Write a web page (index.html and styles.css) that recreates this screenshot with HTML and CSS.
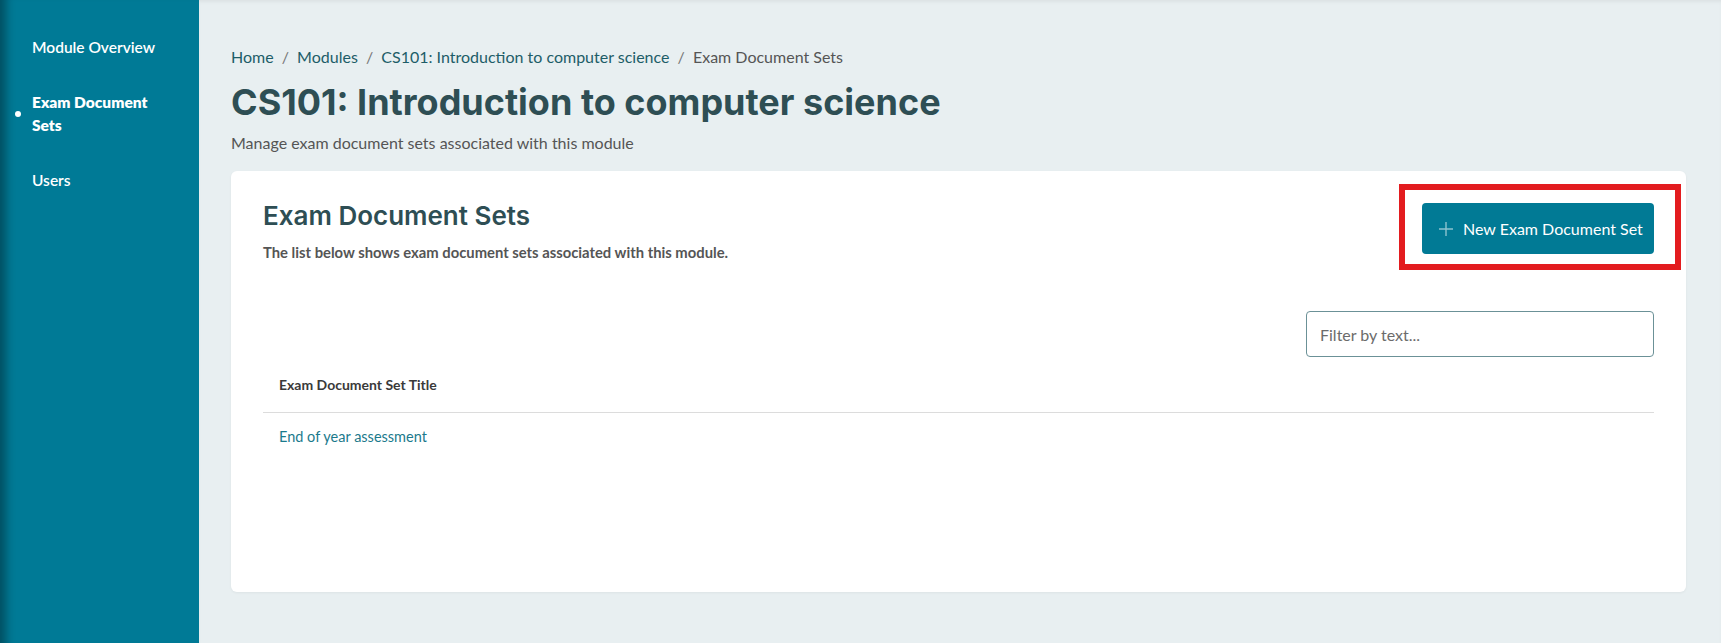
FILE: index.html
```html
<!DOCTYPE html>
<html lang="en">
<head>
  <meta charset="UTF-8">
  <meta name="viewport" content="width=device-width, initial-scale=1.0">
  <title>Exam Document Sets - CS101</title>
  <link rel="stylesheet" href="styles.css">
</head>
<body>
  <aside class="sidebar">
    <ul class="side-nav">
      <li><a href="#">Module Overview</a></li>
      <li class="active"><a href="#">Exam Document Sets</a></li>
      <li><a href="#">Users</a></li>
    </ul>
  </aside>

  <main class="content">
    <nav class="breadcrumb">
      <a href="#">Home</a>
      <span class="sep">/</span>
      <a href="#">Modules</a>
      <span class="sep">/</span>
      <a href="#">CS101: Introduction to computer science</a>
      <span class="sep">/</span>
      <span class="current">Exam Document Sets</span>
    </nav>
    <h1 class="page-title">CS101: Introduction to computer science</h1>
    <p class="page-desc">Manage exam document sets associated with this module</p>

    <section class="card">
      <div class="card-head">
        <div>
          <h2>Exam Document Sets</h2>
          <p class="card-sub">The list below shows exam document sets associated with this module.</p>
        </div>
        <div class="action">
          <button class="btn-primary" type="button">
            <svg class="plus" width="14" height="14" viewBox="0 0 14 14">
              <path d="M7 0V14M0 7H14" stroke="currentColor" stroke-width="1.4" fill="none"/>
            </svg>
            New Exam Document Set
          </button>
          <span class="highlight"></span>
        </div>
      </div>

      <div class="toolbar">
        <input class="filter" type="text" placeholder="Filter by text...">
      </div>

      <table class="doc-table">
        <thead>
          <tr><th>Exam Document Set Title</th></tr>
        </thead>
        <tbody>
          <tr><td><a href="#">End of year assessment</a></td></tr>
        </tbody>
      </table>
    </section>
  </main>
</body>
</html>
```

FILE: styles.css
```css
body {
    margin: 0;
    display: flex;
    min-height: 643px;
    font-family: Lato, "Liberation Sans", sans-serif;
    background-color: #e8eff1;
    color: #333;
}

a {
    text-decoration: none;
}

/* sidebar */
.sidebar {
    width: 199px;
    flex-shrink: 0;
    background-color: #007a96;
    box-shadow: inset 14px 0 10px -8px rgba(0, 0, 0, 0.35);
}

.side-nav {
    list-style: none;
    margin: 0;
    padding: 36px 28px 0 32px;
}

.side-nav li {
    position: relative;
    margin-bottom: 32px;
    font-size: 15.5px;
    line-height: 23px;
    font-weight: 600;
}

.side-nav li a {
    color: #fff;
}

.side-nav li.active {
    font-weight: 800;
}

.side-nav li.active::before {
    content: "";
    position: absolute;
    left: -17px;
    top: 50%;
    width: 6px;
    height: 6px;
    margin-top: -3px;
    border-radius: 50%;
    background-color: #fff;
}

/* main area */
.content {
    flex: 1;
    padding: 46px 35px 50px 32px;
    box-shadow: inset 0 3px 4px -2px rgba(0, 0, 0, 0.08);
}

.breadcrumb {
    font-size: 16px;
    line-height: 22px;
    color: #555;
}

.breadcrumb a {
    color: #1d5d68;
}

.breadcrumb .sep {
    color: #777;
    margin: 0 4px;
}

.page-title {
    font-family: Inter, "Open Sans", sans-serif;
    font-weight: 700;
    font-size: 36px;
    line-height: 44px;
    color: #2e4e54;
    margin: 12px 0 0 0;
}

.page-desc {
    font-size: 16px;
    line-height: 22px;
    color: #555;
    margin: 8px 0 17px 0;
}

/* card */
.card {
    background-color: #fff;
    border-radius: 6px;
    box-shadow: 0 1px 3px rgba(0, 0, 0, 0.05);
    padding: 32px 32px 32px 32px;
    min-height: 357px;
}

.card-head {
    display: flex;
    justify-content: space-between;
    align-items: flex-start;
}

.card-head h2 {
    font-family: Inter, "Open Sans", sans-serif;
    font-weight: 600;
    font-size: 26px;
    line-height: 26px;
    color: #2e4e54;
    margin: 0;
}

.card-sub {
    font-size: 14.8px;
    line-height: 20px;
    font-weight: 700;
    color: #555;
    margin: 13px 0 0 0;
}

.action {
    position: relative;
}

.btn-primary {
    display: flex;
    align-items: center;
    gap: 10px;
    height: 51px;
    width: 232px;
    padding: 0 10px 0 17px;
    border: none;
    border-radius: 4px;
    background-color: #017a95;
    color: #fff;
    font-family: Lato, "Liberation Sans", sans-serif;
    font-size: 16px;
    white-space: nowrap;
}

.btn-primary .plus {
    flex-shrink: 0;
    color: rgba(255, 255, 255, 0.55);
}

/* red outline drawn around the new-set button */
.highlight {
    position: absolute;
    top: -19px;
    left: -23px;
    right: -27px;
    bottom: -16px;
    border: 6px solid #e31c1f;
    pointer-events: none;
}

.toolbar {
    display: flex;
    justify-content: flex-end;
    margin-top: 49px;
}

.filter {
    width: 348px;
    height: 46px;
    box-sizing: border-box;
    padding: 0 13px;
    border: 1px solid #6b9197;
    border-radius: 4px;
    font-family: Lato, "Liberation Sans", sans-serif;
    font-size: 16px;
    color: #333;
}

.filter::placeholder {
    color: #6b6b6b;
}

.doc-table {
    width: 100%;
    border-collapse: collapse;
    font-size: 14px;
}

.doc-table th {
    text-align: left;
    font-weight: 700;
    color: #3a3a3a;
    padding: 17px 16px;
    line-height: 21px;
    border-bottom: 1px solid #dcdcdc;
}

.doc-table td {
    padding: 14px 16px;
    line-height: 20px;
    font-size: 14.5px;
}

.doc-table td a {
    color: #1b7a8c;
}
```
